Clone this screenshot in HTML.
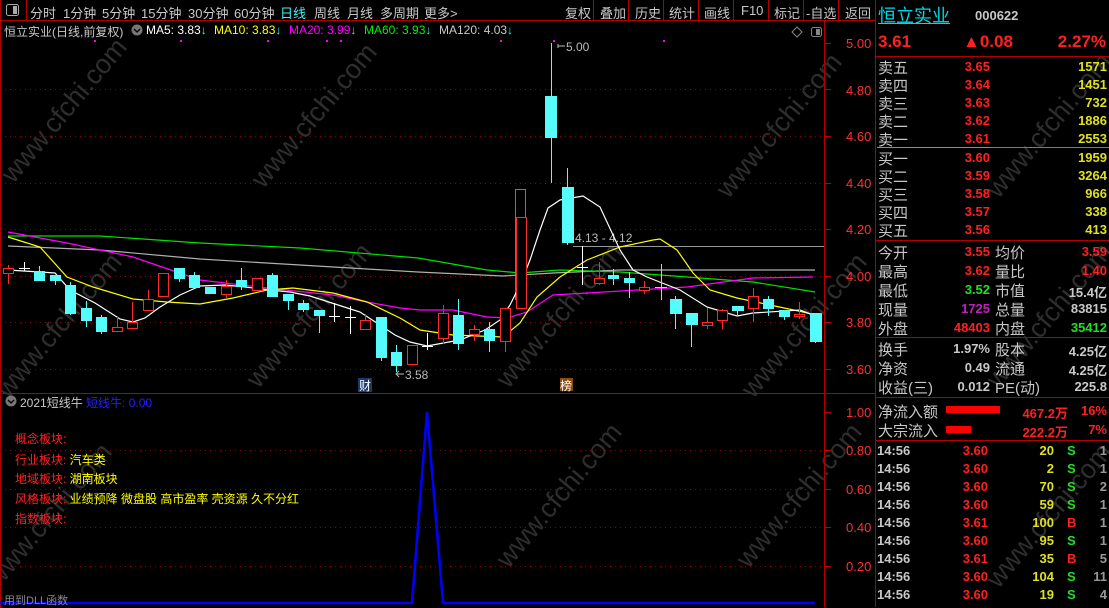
<!DOCTYPE html>
<html><head><meta charset="utf-8">
<style>
*{margin:0;padding:0;box-sizing:border-box}
body{width:1109px;height:607px;background:#000;overflow:hidden;position:relative;font-family:"Liberation Sans","Noto Sans CJK SC",sans-serif;color:#c8c8c8}
.a{position:absolute;white-space:nowrap}
.tb{font-size:13px;top:3px;color:#c8c8c8}
.r{text-align:right}
.lab{font-size:15px;color:#c8c8c8;left:878px}
.num{font-weight:bold;font-size:13px}
.red{color:#ff2020}.yel{color:#e0e020}.grn{color:#20e020}.wht{color:#c8c8c8}
.wm{position:absolute;color:#2e2e2e;font-size:27px;transform:rotate(-50deg);white-space:nowrap}
</style></head><body>

<!-- watermarks -->
<div class="wm" style="left:-25px;top:95px">www.cfchi.com</div>
<div class="wm" style="left:225px;top:100px">www.cfchi.com</div>
<div class="wm" style="left:-30px;top:310px">www.cfchi.com</div>
<div class="wm" style="left:220px;top:300px">www.cfchi.com</div>
<div class="wm" style="left:470px;top:300px">www.cfchi.com</div>
<div class="wm" style="left:715px;top:310px">www.cfchi.com</div>
<div class="wm" style="left:-40px;top:500px">www.cfchi.com</div>
<div class="wm" style="left:470px;top:480px">www.cfchi.com</div>
<div class="wm" style="left:710px;top:480px">www.cfchi.com</div>
<div class="wm" style="left:690px;top:110px">www.cfchi.com</div>
<div class="wm" style="left:960px;top:110px">www.cfchi.com</div>
<div class="wm" style="left:960px;top:300px">www.cfchi.com</div>
<div class="wm" style="left:960px;top:500px">www.cfchi.com</div>

<svg class="a" style="left:0;top:0" width="1109" height="607" xmlns="http://www.w3.org/2000/svg">
<!-- frame lines -->
<g stroke="#b00000" stroke-width="1" fill="none">
<line x1="0" y1="20.5" x2="875" y2="20.5"/>
<line x1="26.5" y1="0" x2="26.5" y2="20"/>
<line x1="0.5" y1="0" x2="0.5" y2="607"/>
<line x1="593.5" y1="0" x2="593.5" y2="20"/><line x1="628.5" y1="0" x2="628.5" y2="20"/>
<line x1="663.5" y1="0" x2="663.5" y2="20"/><line x1="698.5" y1="0" x2="698.5" y2="20"/>
<line x1="733.5" y1="0" x2="733.5" y2="20"/><line x1="768.5" y1="0" x2="768.5" y2="20"/>
<line x1="803.5" y1="0" x2="803.5" y2="20"/><line x1="838.5" y1="0" x2="838.5" y2="20"/>
<line x1="824.5" y1="20" x2="824.5" y2="607"/>
<line x1="875.5" y1="0" x2="875.5" y2="607"/>
<line x1="0" y1="393.5" x2="875" y2="393.5"/>
<line x1="875" y1="56.5" x2="1109" y2="56.5"/>
<line x1="875" y1="240.5" x2="1109" y2="240.5"/>
<line x1="875" y1="337.5" x2="1109" y2="337.5"/>
<line x1="875" y1="397.5" x2="1109" y2="397.5"/>
<line x1="875" y1="440.5" x2="1109" y2="440.5"/>
</g>
<line x1="877" y1="147.5" x2="990" y2="147.5" stroke="#d08020"/>
<line x1="990" y1="147.5" x2="1109" y2="147.5" stroke="#3090d0"/>
<!-- icon box -->
<rect x="6.5" y="4.5" width="12" height="11" rx="2" fill="none" stroke="#aaa"/><rect x="13" y="6" width="4" height="8" fill="#aaa"/>
<rect x="811.5" y="27.5" width="10" height="9" rx="2" fill="none" stroke="#888"/><rect x="816" y="29" width="4" height="6" fill="#888"/>
<path d="M797 27 L802 32 L797 37 L792 32 Z" fill="none" stroke="#888"/>
<circle cx="137" cy="30" r="5.5" fill="#777"/><path d="M134 29 L137 32 L140 29" stroke="#000" fill="none" stroke-width="1.3"/>
<circle cx="11" cy="401" r="5.5" fill="#777"/><path d="M8 400 L11 403 L14 400" stroke="#000" fill="none" stroke-width="1.3"/>
<!-- grid -->
<g stroke="#900000" stroke-dasharray="1,4">
<line x1="0" y1="89.5" x2="824" y2="89.5"/><line x1="0" y1="136.5" x2="824" y2="136.5"/>
<line x1="0" y1="183.5" x2="824" y2="183.5"/><line x1="0" y1="229.5" x2="824" y2="229.5"/>
<line x1="0" y1="276.5" x2="824" y2="276.5"/><line x1="0" y1="322.5" x2="824" y2="322.5"/>
<line x1="0" y1="369.5" x2="824" y2="369.5"/>
<line x1="0" y1="450.5" x2="824" y2="450.5"/><line x1="0" y1="489.5" x2="824" y2="489.5"/>
<line x1="0" y1="527.5" x2="824" y2="527.5"/><line x1="0" y1="566.5" x2="824" y2="566.5"/>
</g>
<!-- axis ticks -->
<g stroke="#c00000">
<line x1="824" y1="43.5" x2="831" y2="43.5"/><line x1="824" y1="89.5" x2="831" y2="89.5"/><line x1="824" y1="136.5" x2="831" y2="136.5"/><line x1="824" y1="183.5" x2="831" y2="183.5"/><line x1="824" y1="229.5" x2="831" y2="229.5"/><line x1="824" y1="276.5" x2="831" y2="276.5"/><line x1="824" y1="322.5" x2="831" y2="322.5"/><line x1="824" y1="369.5" x2="831" y2="369.5"/>
<line x1="824" y1="412.5" x2="831" y2="412.5"/><line x1="824" y1="450.5" x2="831" y2="450.5"/><line x1="824" y1="489.5" x2="831" y2="489.5"/><line x1="824" y1="527.5" x2="831" y2="527.5"/><line x1="824" y1="566.5" x2="831" y2="566.5"/>
</g>
<g fill="#ff3030" font-size="13" font-family="Liberation Sans">
<text x="846" y="48">5.00</text><text x="846" y="95">4.80</text><text x="846" y="141">4.60</text><text x="846" y="188">4.40</text><text x="846" y="234">4.20</text><text x="846" y="281">4.00</text><text x="846" y="327">3.80</text><text x="846" y="374">3.60</text>
<text x="846" y="417">1.00</text><text x="846" y="455">0.80</text><text x="846" y="494">0.60</text><text x="846" y="532">0.40</text><text x="846" y="571">0.20</text>
</g>
<!-- magenta dots -->
<g fill="#ff00ff"><rect x="94" y="40" width="2" height="2"/><rect x="180" y="40" width="2" height="2"/><rect x="267" y="40" width="2" height="2"/><rect x="326" y="40" width="2" height="2"/><rect x="340" y="40" width="2" height="2"/><rect x="500" y="40" width="2" height="2"/><rect x="553" y="40" width="2" height="2"/><rect x="663" y="40" width="2" height="2"/></g>
<!-- 4.13 line -->
<line x1="573" y1="246.5" x2="824" y2="246.5" stroke="#999"/>
<text x="575" y="242" fill="#bbb" font-size="12" font-family="Liberation Sans">4.13 - 4.12</text>
<text x="566" y="51" fill="#bbb" font-size="12" font-family="Liberation Sans">5.00</text><path d="M558 46 L565 46 M558 44 L558 48" stroke="#bbb"/>
<text x="405" y="379" fill="#bbb" font-size="12" font-family="Liberation Sans">3.58</text><path d="M397 374 L404 374 M399 371 L396 374 L399 377" stroke="#bbb" fill="none"/>
<rect x="515.5" y="189.5" width="10" height="110" fill="none" stroke="#777"/>
<!-- MA lines -->
<g fill="none" stroke-width="1.2">
<polyline stroke="#b0b0b0" points="8,246 100,250 200,259 300,265 418,272 503,276 553,273 620,270 687,270 815,270"/>
<polyline stroke="#00e000" points="8,236 100,236 200,243 300,248 418,258 487,270 520,273 560,270 620,272 687,277 753,282 815,292"/>
<polyline stroke="#ff00ff" points="8,232 67,243 133,257 200,280 267,288 333,295 367,302 400,308 420,310 453,310 487,317 507,318 527,312 553,295 587,293 637,290 687,287 753,278 813,277"/>
<polyline stroke="#ffff00" points="8,237 40,247 67,277 93,287 133,299 167,302 200,304 233,298 267,290 293,288 333,293 367,302 400,318 420,330 453,335 503,337 520,323 537,297 560,277 587,260 620,247 653,240 660,239 677,250 693,273 710,290 737,298 770,305 803,312 815,315"/>
<polyline stroke="#ffffff" points="8,270 55,273 70,290 95,303 120,319 133,322 145,318 160,307 180,295 200,286 225,285 245,287 270,290 290,292 310,296 335,304 360,312 380,325 395,335 410,342 427,346 460,340 485,330 500,320 510,305 520,285 530,260 540,230 548,208 560,200 583,196 600,207 620,250 633,270 647,277 680,290 707,307 737,316 753,313 800,310 813,315"/>
</g>
<!-- candles -->
<g stroke-width="1">
<g stroke="#ff2828" fill="none">
<line x1="8.5" y1="265" x2="8.5" y2="284"/><rect x="3.5" y="268.5" width="10" height="5" fill="#000"/>
<line x1="117.5" y1="316" x2="117.5" y2="331"/><rect x="112.5" y="327.5" width="10" height="4" fill="#000"/>
<line x1="132.5" y1="302" x2="132.5" y2="328"/><rect x="127.5" y="322.5" width="10" height="6" fill="#000"/>
<line x1="148.5" y1="290" x2="148.5" y2="310"/><rect x="143.5" y="299.5" width="10" height="11" fill="#000"/>
<rect x="158.5" y="273.5" width="10" height="23" fill="#000"/>
<line x1="226.5" y1="280" x2="226.5" y2="298"/><rect x="221.5" y="286.5" width="10" height="8" fill="#000"/>
<rect x="252.5" y="278.5" width="10" height="12" fill="#000"/>
<line x1="365.5" y1="314" x2="365.5" y2="329"/><rect x="360.5" y="320.5" width="10" height="9" fill="#000"/>
<rect x="407.5" y="345.5" width="10" height="19" fill="#000"/>
<line x1="443.5" y1="305" x2="443.5" y2="344"/><rect x="438.5" y="313.5" width="10" height="25" fill="#000"/>
<line x1="474.5" y1="325" x2="474.5" y2="341"/><rect x="469.5" y="329.5" width="10" height="5" fill="#000"/>
<line x1="505.5" y1="341" x2="505.5" y2="352"/><rect x="500.5" y="308.5" width="10" height="33" fill="#000"/>
<rect x="516.5" y="217.5" width="10" height="91" fill="#000"/>
<line x1="599.5" y1="262" x2="599.5" y2="285"/><rect x="594.5" y="278.5" width="10" height="5" fill="#000"/>
<line x1="644.5" y1="281" x2="644.5" y2="294"/><rect x="639.5" y="287.5" width="10" height="3" fill="#000"/>
<line x1="707.5" y1="308" x2="707.5" y2="329"/><rect x="702.5" y="322.5" width="10" height="3" fill="#000"/>
<line x1="722.5" y1="309" x2="722.5" y2="329"/><rect x="717.5" y="310.5" width="10" height="10" fill="#000"/>
<line x1="753.5" y1="288" x2="753.5" y2="322"/><rect x="748.5" y="296.5" width="10" height="12" fill="#000"/>
<line x1="799.5" y1="302" x2="799.5" y2="319"/><rect x="794.5" y="314.5" width="10" height="2" fill="#000"/>
</g>
<g fill="#54fcfc" stroke="#54fcfc">
<line x1="39.5" y1="266" x2="39.5" y2="280"/><rect x="34.5" y="271.5" width="10" height="9"/>
<line x1="55.5" y1="275" x2="55.5" y2="285"/><rect x="50.5" y="275.5" width="10" height="5"/>
<line x1="70.5" y1="282" x2="70.5" y2="315"/><rect x="65.5" y="285.5" width="10" height="28"/>
<line x1="86.5" y1="301" x2="86.5" y2="327"/><rect x="81.5" y="308.5" width="10" height="12"/>
<line x1="101.5" y1="315" x2="101.5" y2="334"/><rect x="96.5" y="317.5" width="10" height="14"/>
<line x1="179.5" y1="268" x2="179.5" y2="282"/><rect x="174.5" y="268.5" width="10" height="10"/>
<line x1="194.5" y1="272" x2="194.5" y2="288"/><rect x="189.5" y="275.5" width="10" height="12"/>
<rect x="205.5" y="287.5" width="10" height="6"/>
<line x1="241.5" y1="268" x2="241.5" y2="290"/><rect x="236.5" y="280.5" width="10" height="6"/>
<line x1="272.5" y1="273" x2="272.5" y2="297"/><rect x="267.5" y="275.5" width="10" height="21"/>
<line x1="288.5" y1="294" x2="288.5" y2="310"/><rect x="283.5" y="294.5" width="10" height="6"/>
<line x1="303.5" y1="300" x2="303.5" y2="312"/><rect x="298.5" y="303.5" width="10" height="6"/>
<line x1="319.5" y1="310" x2="319.5" y2="333"/><rect x="314.5" y="310.5" width="10" height="5"/>
<line x1="381.5" y1="317" x2="381.5" y2="361"/><rect x="376.5" y="317.5" width="10" height="40"/>
<line x1="396.5" y1="345" x2="396.5" y2="372"/><rect x="391.5" y="352.5" width="10" height="13"/>
<line x1="458.5" y1="299" x2="458.5" y2="350"/><rect x="453.5" y="315.5" width="10" height="28"/>
<line x1="489.5" y1="322" x2="489.5" y2="352"/><rect x="484.5" y="329.5" width="10" height="11"/>
<line x1="551.5" y1="43" x2="551.5" y2="183"/><rect x="545.5" y="96.5" width="11" height="41"/>
<line x1="567.5" y1="168" x2="567.5" y2="245"/><rect x="562.5" y="187.5" width="11" height="55"/>
<line x1="613.5" y1="269" x2="613.5" y2="285"/><rect x="608.5" y="275.5" width="10" height="3"/>
<line x1="629.5" y1="272" x2="629.5" y2="298"/><rect x="624.5" y="278.5" width="10" height="4"/>
<line x1="661.5" y1="264" x2="661.5" y2="300"/><line x1="655" y1="287.5" x2="667" y2="287.5"/>
<line x1="675.5" y1="296" x2="675.5" y2="329"/><rect x="670.5" y="299.5" width="11" height="14"/>
<line x1="691.5" y1="313" x2="691.5" y2="347"/><rect x="686.5" y="313.5" width="11" height="11"/>
<line x1="737.5" y1="306" x2="737.5" y2="316"/><rect x="732.5" y="306.5" width="11" height="4"/>
<line x1="768.5" y1="296" x2="768.5" y2="316"/><rect x="763.5" y="299.5" width="10" height="9"/>
<line x1="784.5" y1="310" x2="784.5" y2="320"/><rect x="779.5" y="310.5" width="10" height="6"/>
<line x1="815.5" y1="313" x2="815.5" y2="343"/><rect x="810.5" y="313.5" width="11" height="28"/>
</g>
<g stroke="#ffffff">
<line x1="24.5" y1="262" x2="24.5" y2="271"/><line x1="19" y1="268.5" x2="30" y2="268.5"/>
<line x1="334.5" y1="303" x2="334.5" y2="322"/><line x1="329" y1="316.5" x2="340" y2="316.5"/>
<line x1="350.5" y1="306" x2="350.5" y2="334"/><line x1="345" y1="317.5" x2="356" y2="317.5"/>
<line x1="427.5" y1="333" x2="427.5" y2="350"/><line x1="422" y1="346.5" x2="433" y2="346.5"/>
<line x1="582.5" y1="246" x2="582.5" y2="285"/><line x1="577" y1="267.5" x2="588" y2="267.5"/>
</g>
</g>
<!-- markers -->
<rect x="358" y="378" width="14" height="14" fill="#1a3a6a"/><text x="359" y="390" fill="#fff" font-size="12" font-family="Noto Sans CJK SC">财</text>
<rect x="560" y="378" width="13" height="13" fill="#8a4a10"/><text x="560" y="390" fill="#fff" font-size="12" font-family="Noto Sans CJK SC">榜</text>
<!-- sub indicator -->
<polyline fill="none" stroke="#0000ff" stroke-width="2.5" points="0,603 412,603 427,412 443,603 815,603"/>
<!-- flow bars -->
<rect x="946" y="406" width="54" height="7" fill="#ff0000"/>
<rect x="946" y="426" width="25" height="7" fill="#ff0000"/>
</svg>

<!-- toolbar -->
<div class="a tb" style="left:30px">分时</div>
<div class="a tb" style="left:63px">1分钟</div>
<div class="a tb" style="left:102px">5分钟</div>
<div class="a tb" style="left:141px">15分钟</div>
<div class="a tb" style="left:188px">30分钟</div>
<div class="a tb" style="left:234px">60分钟</div>
<div class="a tb" style="left:280px;color:#40f0f0">日线</div>
<div class="a tb" style="left:314px">周线</div>
<div class="a tb" style="left:347px">月线</div>
<div class="a tb" style="left:380px">多周期</div>
<div class="a tb" style="left:424px">更多&gt;</div>
<div class="a tb" style="left:565px">复权</div>
<div class="a tb" style="left:600px">叠加</div>
<div class="a tb" style="left:635px">历史</div>
<div class="a tb" style="left:669px">统计</div>
<div class="a tb" style="left:704px">画线</div>
<div class="a tb" style="left:741px">F10</div>
<div class="a tb" style="left:774px">标记</div>
<div class="a tb" style="left:806px">-自选</div>
<div class="a tb" style="left:845px">返回</div>

<!-- title line -->
<div class="a" style="left:4px;top:23px;font-size:12px;color:#c8c8c8">恒立实业(日线,前复权)</div>
<div class="a" style="left:146px;top:23px;font-size:12px;color:#fff">MA5: 3.83<span style="color:#40f0f0">↓</span></div>
<div class="a" style="left:214px;top:23px;font-size:12px;color:#ffff00">MA10: 3.83<span style="color:#40f0f0">↓</span></div>
<div class="a" style="left:289px;top:23px;font-size:12px;color:#ff00ff">MA20: 3.99<span style="color:#40f0f0">↓</span></div>
<div class="a" style="left:364px;top:23px;font-size:12px;color:#00f000">MA60: 3.93<span style="color:#40f0f0">↓</span></div>
<div class="a" style="left:439px;top:23px;font-size:12px;color:#c8c8c8">MA120: 4.03<span style="color:#40f0f0">↓</span></div>

<!-- sub panel texts -->
<div class="a" style="left:20px;top:394px;font-size:12px;color:#c8c8c8">2021短线牛 <span style="color:#2020ff">短线牛: 0.00</span></div>
<div class="a" style="left:15px;top:430px;font-size:12px;color:#ff2020">概念板块:</div>
<div class="a" style="left:15px;top:451px;font-size:12px;color:#ff2020">行业板块: <span style="color:#ffff00">汽车类</span></div>
<div class="a" style="left:15px;top:470px;font-size:12px;color:#ff2020">地域板块: <span style="color:#ffff00">湖南板块</span></div>
<div class="a" style="left:15px;top:490px;font-size:12px;color:#ff2020">风格板块: <span style="color:#ffff00">业绩预降 微盘股 高市盈率 壳资源 久不分红</span></div>
<div class="a" style="left:15px;top:510px;font-size:12px;color:#ff2020">指数板块:</div>
<div class="a" style="left:4px;top:592px;font-size:11px;color:#888">用到DLL函数</div>

<!-- right panel -->
<div class="a" style="left:878px;top:2px;font-size:18px;color:#00d8e8;text-decoration:underline">恒立实业</div>
<div class="a" style="left:975px;top:8px;font-size:13px;font-weight:bold;color:#c8c8c8">000622</div>
<div class="a red" style="left:878px;top:32px;font-size:17px;font-weight:bold">3.61</div>
<div class="a red" style="left:963px;top:32px;font-size:17px;font-weight:bold">▲0.08</div>
<div class="a red r" style="right:3px;top:32px;font-size:17px;font-weight:bold">2.27%</div>

<div class="a lab" style="top:57px">卖五</div><div class="a num red r" style="right:119px;top:59px">3.65</div><div class="a num yel r" style="right:2px;top:59px">1571</div>
<div class="a lab" style="top:75px">卖四</div><div class="a num red r" style="right:119px;top:77px">3.64</div><div class="a num yel r" style="right:2px;top:77px">1451</div>
<div class="a lab" style="top:93px">卖三</div><div class="a num red r" style="right:119px;top:95px">3.63</div><div class="a num yel r" style="right:2px;top:95px">732</div>
<div class="a lab" style="top:111px">卖二</div><div class="a num red r" style="right:119px;top:113px">3.62</div><div class="a num yel r" style="right:2px;top:113px">1886</div>
<div class="a lab" style="top:129px">卖一</div><div class="a num red r" style="right:119px;top:131px">3.61</div><div class="a num yel r" style="right:2px;top:131px">2553</div>
<div class="a lab" style="top:148px">买一</div><div class="a num red r" style="right:119px;top:150px">3.60</div><div class="a num yel r" style="right:2px;top:150px">1959</div>
<div class="a lab" style="top:166px">买二</div><div class="a num red r" style="right:119px;top:168px">3.59</div><div class="a num yel r" style="right:2px;top:168px">3264</div>
<div class="a lab" style="top:184px">买三</div><div class="a num red r" style="right:119px;top:186px">3.58</div><div class="a num yel r" style="right:2px;top:186px">966</div>
<div class="a lab" style="top:202px">买四</div><div class="a num red r" style="right:119px;top:204px">3.57</div><div class="a num yel r" style="right:2px;top:204px">338</div>
<div class="a lab" style="top:220px">买五</div><div class="a num red r" style="right:119px;top:222px">3.56</div><div class="a num yel r" style="right:2px;top:222px">413</div>

<div class="a lab" style="top:242px">今开</div><div class="a num red r" style="right:119px;top:244px">3.55</div><div class="a lab" style="left:995px;top:242px">均价</div><div class="a num red r" style="right:2px;top:244px">3.59</div>
<div class="a lab" style="top:261px">最高</div><div class="a num red r" style="right:119px;top:263px">3.62</div><div class="a lab" style="left:995px;top:261px">量比</div><div class="a num red r" style="right:2px;top:263px">1.40</div>
<div class="a lab" style="top:280px">最低</div><div class="a num grn r" style="right:119px;top:282px">3.52</div><div class="a lab" style="left:995px;top:280px">市值</div><div class="a num wht r" style="right:2px;top:282px">15.4亿</div>
<div class="a lab" style="top:299px">现量</div><div class="a num r" style="right:119px;top:301px;color:#c020c0">1725</div><div class="a lab" style="left:995px;top:299px">总量</div><div class="a num wht r" style="right:2px;top:301px">83815</div>
<div class="a lab" style="top:318px">外盘</div><div class="a num red r" style="right:119px;top:320px">48403</div><div class="a lab" style="left:995px;top:318px">内盘</div><div class="a num grn r" style="right:2px;top:320px">35412</div>

<div class="a lab" style="top:339px">换手</div><div class="a num wht r" style="right:119px;top:341px">1.97%</div><div class="a lab" style="left:995px;top:339px">股本</div><div class="a num wht r" style="right:2px;top:341px">4.25亿</div>
<div class="a lab" style="top:358px">净资</div><div class="a num wht r" style="right:119px;top:360px">0.49</div><div class="a lab" style="left:995px;top:358px">流通</div><div class="a num wht r" style="right:2px;top:360px">4.25亿</div>
<div class="a lab" style="top:377px">收益(三)</div><div class="a num wht r" style="right:119px;top:379px">0.012</div><div class="a lab" style="left:995px;top:377px">PE(动)</div><div class="a num wht r" style="right:2px;top:379px">225.8</div>

<div class="a lab" style="top:401px">净流入额</div><div class="a num red r" style="right:41px;top:403px">467.2万</div><div class="a num red r" style="right:2px;top:403px">16%</div>
<div class="a lab" style="top:420px">大宗流入</div><div class="a num red r" style="right:41px;top:422px">222.2万</div><div class="a num red r" style="right:2px;top:422px">7%</div>

<div style="position:absolute;left:877px;top:443px;width:232px;font-weight:bold;font-size:13px">
<div style="position:relative;height:18px"><span class="a wht" style="left:0">14:56</span><span class="a red r" style="right:121px">3.60</span><span class="a yel r" style="right:55px">20</span><span class="a grn" style="left:190px">S</span><span class="a r" style="right:2px;color:#999">1</span></div>
<div style="position:relative;height:18px"><span class="a wht" style="left:0">14:56</span><span class="a red r" style="right:121px">3.60</span><span class="a yel r" style="right:55px">2</span><span class="a grn" style="left:190px">S</span><span class="a r" style="right:2px;color:#999">1</span></div>
<div style="position:relative;height:18px"><span class="a wht" style="left:0">14:56</span><span class="a red r" style="right:121px">3.60</span><span class="a yel r" style="right:55px">70</span><span class="a grn" style="left:190px">S</span><span class="a r" style="right:2px;color:#999">2</span></div>
<div style="position:relative;height:18px"><span class="a wht" style="left:0">14:56</span><span class="a red r" style="right:121px">3.60</span><span class="a yel r" style="right:55px">59</span><span class="a grn" style="left:190px">S</span><span class="a r" style="right:2px;color:#999">1</span></div>
<div style="position:relative;height:18px"><span class="a wht" style="left:0">14:56</span><span class="a red r" style="right:121px">3.61</span><span class="a yel r" style="right:55px">100</span><span class="a red" style="left:190px">B</span><span class="a r" style="right:2px;color:#999">1</span></div>
<div style="position:relative;height:18px"><span class="a wht" style="left:0">14:56</span><span class="a red r" style="right:121px">3.60</span><span class="a yel r" style="right:55px">95</span><span class="a grn" style="left:190px">S</span><span class="a r" style="right:2px;color:#999">1</span></div>
<div style="position:relative;height:18px"><span class="a wht" style="left:0">14:56</span><span class="a red r" style="right:121px">3.61</span><span class="a yel r" style="right:55px">35</span><span class="a red" style="left:190px">B</span><span class="a r" style="right:2px;color:#999">5</span></div>
<div style="position:relative;height:18px"><span class="a wht" style="left:0">14:56</span><span class="a red r" style="right:121px">3.60</span><span class="a yel r" style="right:55px">104</span><span class="a grn" style="left:190px">S</span><span class="a r" style="right:2px;color:#999">11</span></div>
<div style="position:relative;height:18px"><span class="a wht" style="left:0">14:56</span><span class="a red r" style="right:121px">3.60</span><span class="a yel r" style="right:55px">19</span><span class="a grn" style="left:190px">S</span><span class="a r" style="right:2px;color:#999">4</span></div>
</div>
</body></html>
